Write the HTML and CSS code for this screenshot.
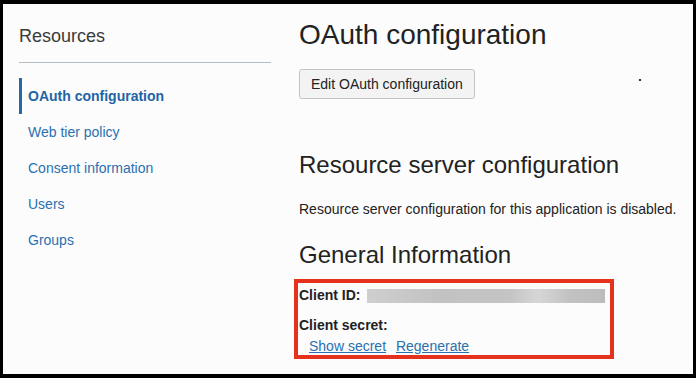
FILE: index.html
```html
<!DOCTYPE html>
<html lang="en">
<head>
    <meta charset="UTF-8">
    <title>OAuth configuration</title>
    <link rel="stylesheet" href="styles.css">
</head>
<body>
<div class="frame">
    <div class="sidebar">
        <div class="sidebar-title">Resources</div>
        <ul class="nav">
            <li class="active"><a href="#">OAuth configuration</a></li>
            <li><a href="#">Web tier policy</a></li>
            <li><a href="#">Consent information</a></li>
            <li><a href="#">Users</a></li>
            <li><a href="#">Groups</a></li>
        </ul>
    </div>
    <div class="main">
        <span class="stray-dot"></span>
        <h1>OAuth configuration</h1>
        <button class="edit-btn">Edit OAuth configuration</button>
        <h2 class="server-title">Resource server configuration</h2>
        <p class="note">Resource server configuration for this application is disabled.</p>
        <h2 class="info-title">General Information</h2>
        <div class="highlight">
            <div class="row"><b>Client ID:</b> <span class="blurred"></span></div>
            <div class="row secret"><b>Client secret:</b></div>
            <div class="links">
                <a href="#">Show secret</a>
                <a href="#">Regenerate</a>
            </div>
        </div>
    </div>
</div>
</body>
</html>
```

FILE: styles.css
```css
body {
    margin: 0;
    padding: 0;
    background-color: #000;
    font-family: "Liberation Sans", Arial, sans-serif;
    color: #222;
}

.frame {
    margin: 4px 3px;
    height: 370px;
    display: flex;
    background-color: #fcfcfc;
    overflow: hidden;
}

.sidebar {
    width: 252px;
    padding: 21px 28px 0 16px;
    flex-shrink: 0;
}

.sidebar-title {
    font-size: 18px;
    line-height: 22px;
    color: #3a3a3a;
    padding-bottom: 15px;
    border-bottom: 1px solid #b4bcc4;
}

.nav {
    list-style: none;
    margin: 15px 0 0 0;
    padding: 0;
}

.nav li {
    height: 36px;
    line-height: 36px;
    font-size: 14px;
    padding-left: 9px;
}

.nav li.active {
    border-left: 3px solid #2369a8;
    padding-left: 6px;
    font-weight: bold;
}

.nav a {
    color: #2a70b0;
    text-decoration: none;
}

.nav li.active a {
    color: #1f64a4;
}

.main {
    position: relative;
    flex: 1;
    padding-top: 15px;
}

.stray-dot {
    position: absolute;
    left: 340px;
    top: 75px;
    width: 2px;
    height: 2px;
    background-color: #333;
}

h1 {
    margin: 0;
    font-size: 28px;
    line-height: 32px;
    font-weight: normal;
    color: #222;
}

.edit-btn {
    display: block;
    margin-top: 18px;
    height: 30px;
    padding: 0 11px;
    font-family: inherit;
    font-size: 14px;
    color: #222;
    background-color: #f3f3f3;
    border: 1px solid #c4c4c4;
    border-radius: 3px;
}

h2 {
    margin: 0;
    font-size: 24px;
    line-height: 28px;
    font-weight: normal;
    color: #222;
}

.server-title {
    margin-top: 52px;
}

.note {
    margin: 21px 0 0 0;
    font-size: 14px;
    line-height: 18px;
}

.info-title {
    margin-top: 23px;
}

.highlight {
    width: 311px;
    margin: 10px 0 0 -5px;
    padding: 3px 0 0 1px;
    border: 4px solid #e5321c;
    box-sizing: content-box;
    height: 69px;
}

.row {
    font-size: 14px;
    line-height: 18px;
}

.row.secret {
    margin-top: 12px;
}

.blurred {
    display: inline-block;
    width: 238px;
    height: 14px;
    margin-left: 3px;
    vertical-align: -3px;
    background: linear-gradient(to right, #cfcfcf 0%, #c2c2c2 30%, #c4c4c4 60%, #d6d6d6 72%, #c2c2c2 85%, #bcbcbc 100%);
}

.links {
    margin-top: 4px;
    padding-left: 10px;
    font-size: 14px;
    line-height: 17px;
}

.links a {
    color: #2a70b0;
    text-decoration: underline;
    margin-right: 6px;
}
```
